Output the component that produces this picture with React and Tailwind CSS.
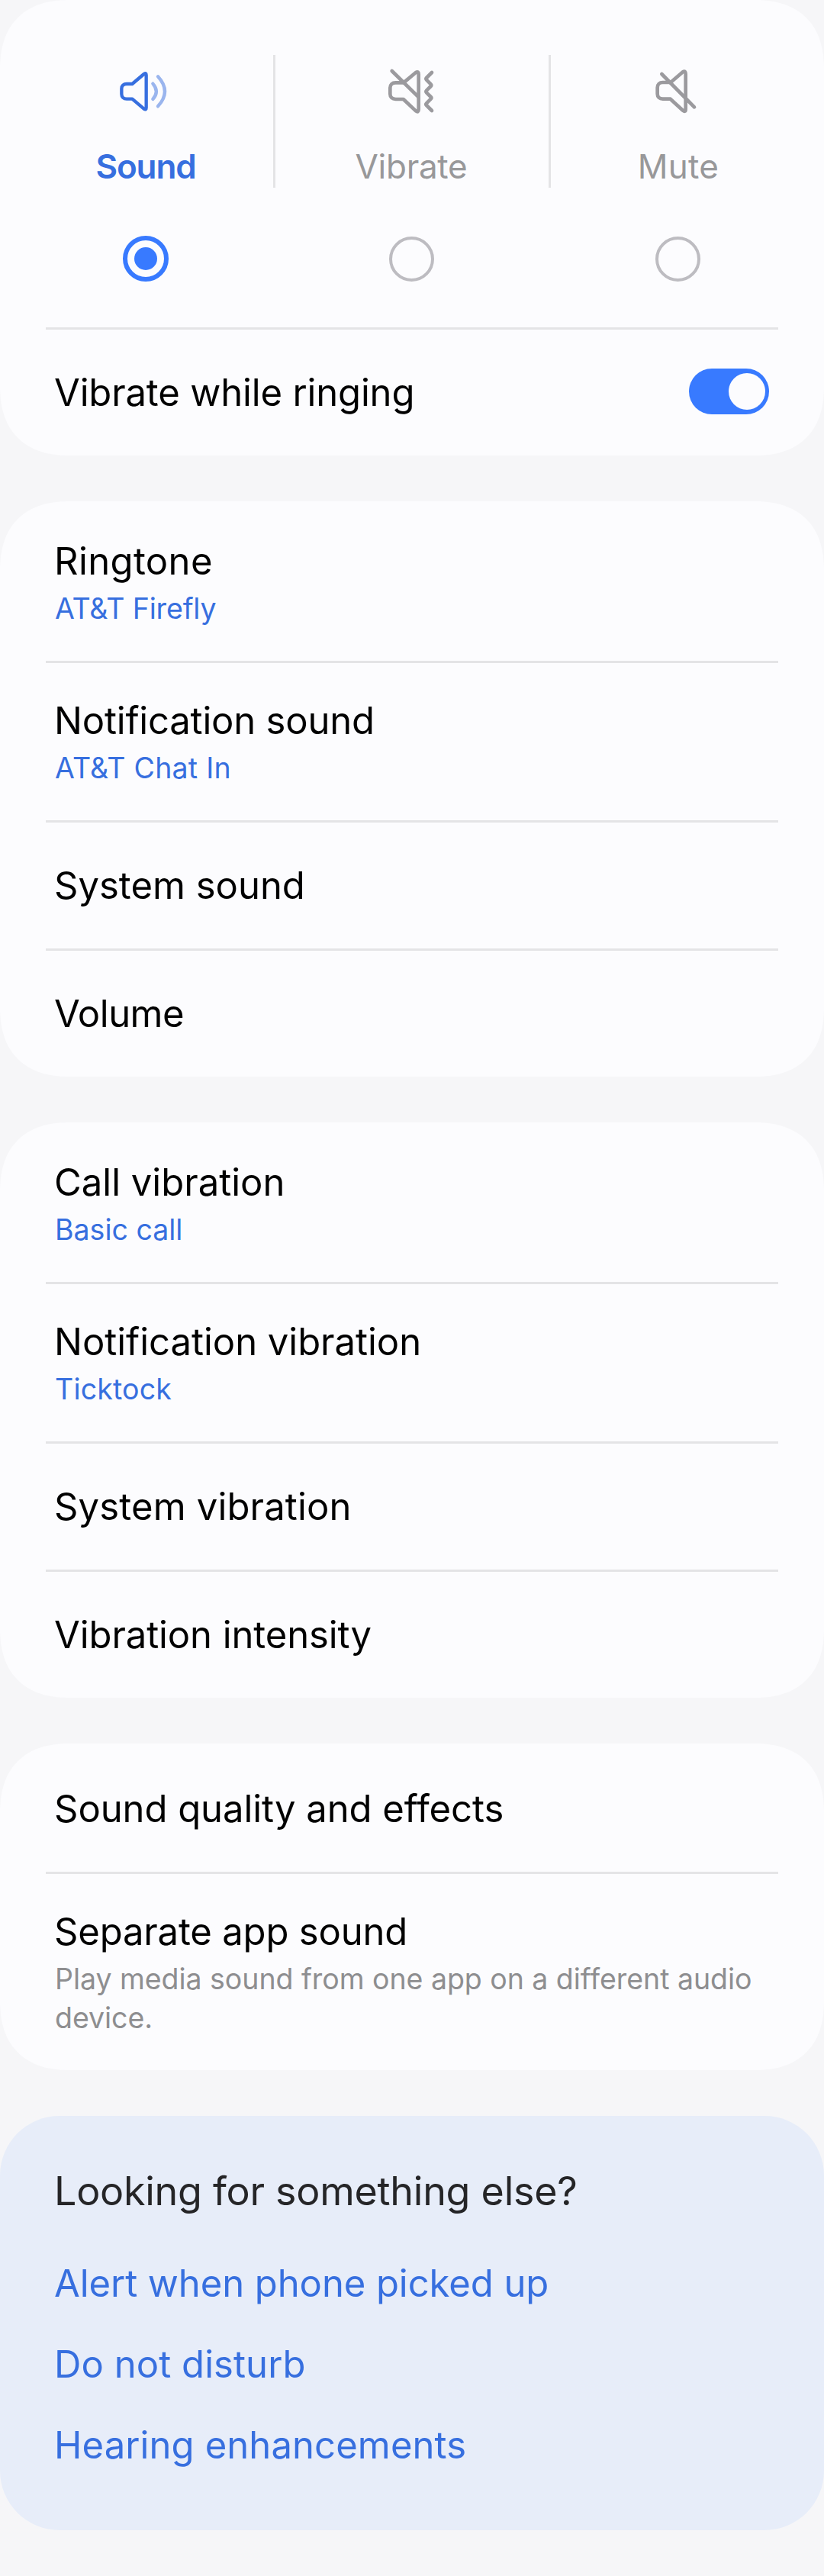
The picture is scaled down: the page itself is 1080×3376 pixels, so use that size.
function SoundIcon() {
  return (
    <svg width="102" height="80" viewBox="0 0 306 240" fill="none" strokeLinecap="round" strokeLinejoin="round">
      <path d="M100 90H78C66 90 58 97 58 109V130C58 142 66 149 78 149H100L146 188Q155 194 155 184V55Q155 45 146 51Z" stroke="#376fdf" strokeWidth="13" />
      <path d="M181 89Q208 120 181 150M201 61Q255 120 201 178" stroke="#9ab5ee" strokeWidth="13" />
    </svg>
  );
}

function VibrateIcon() {
  return (
    <svg width="100" height="80" viewBox="0 0 300 240" fill="none" stroke="#9b9a9e" strokeWidth="14" strokeLinecap="round" strokeLinejoin="round">
      <path d="M117 85H86C72 85 64 93 64 105V130C64 142 72 150 86 150H116L165 196Q176 204 176 190V52Q176 38 165 45Z" />
      <path d="M71 39L176 142" />
      <path d="M228 45L207 66Q203 70 207 74L224 91Q228 95 224 99L207 116Q203 120 207 124L224 141Q228 145 224 149L207 166Q203 170 207 174L228 195" />
    </svg>
  );
}

function MuteIcon() {
  return (
    <svg width="98" height="80" viewBox="0 0 294 240" fill="none" stroke="#9b9a9e" strokeWidth="14" strokeLinecap="round" strokeLinejoin="round">
      <path d="M117 84H86C73 84 65 92 65 104V129C65 141 73 149 86 149H116L165 194Q176 203 176 189V51Q176 36 165 43Z" />
      <path d="M82 51L210 181" />
    </svg>
  );
}

function Mode({ icon, label, selected, className }) {
  return (
    <div className={"flex w-[358px] flex-col items-center pt-20 pb-[60px] " + className}>
      {icon}
      <div className={"mt-[31px] text-[44px] leading-[54px] " + (selected ? "font-semibold tracking-[-1.1px] text-[#376fdf]" : "text-[#98989a]")}>
        {label}
      </div>
      {selected ? (
        <div className="mt-16 flex size-[60px] items-center justify-center rounded-full border-[6px] border-[#387aff]">
          <div className="size-[30px] rounded-full bg-[#387aff]" />
        </div>
      ) : (
        <div className="mt-16 flex size-[60px] items-center">
          <div className="size-[59px] rounded-full border-[4.5px] border-[#bdbcc1]" />
        </div>
      )}
    </div>
  );
}

function Card({ children }) {
  return (
    <section className="w-full rounded-[92px] bg-[#fcfcfe] [corner-shape:superellipse(1.25)]">{children}</section>
  );
}

function Divider({ hidden }) {
  return <div className={"mx-[60px] h-[3px] " + (hidden ? "" : "bg-[#e4e4e6]")} />;
}

function Item({ title, tracking = "", sub, subTracking = "", subColor = "text-[#376fdf]", first, end }) {
  return (
    <div>
      <Divider hidden={first} />
      <div className={sub ? "px-[72px] pt-11 pb-[43px]" : "flex items-center justify-between px-[72px] pt-[51px] pb-[52px]"}>
        <div className={"-ml-px pt-0.5 text-[49px] leading-[60px] whitespace-nowrap text-black " + tracking}>{title}</div>
        {sub && <div className={"mt-1.5 text-[37.5px] leading-[51px] " + subColor + " " + subTracking}>{sub}</div>}
        {end}
      </div>
    </div>
  );
}

function Toggle() {
  return (
    <div className="-mt-2.5 -mb-2 flex h-[60px] w-[105px] items-center justify-end rounded-full bg-[#387aff] pr-[5px]">
      <div className="size-12 rounded-full bg-[#fcfcfe]" />
    </div>
  );
}

export default function App() {
  return (
    <main className="flex h-[3376px] w-[1080px] flex-col gap-[60px] bg-[#f6f6f8] font-['Inter',sans-serif]">
      <Card>
        <div className="flex h-[429px]">
          <Mode icon={<SoundIcon />} label="Sound" selected className="pl-6" />
          <div className="mt-[72px] h-[174px] w-[3px] bg-[#e4e4e6]" />
          <Mode icon={<VibrateIcon />} label={<span className="-ml-0.5 tracking-[-0.28px]">Vibrate</span>} className="" />
          <div className="mt-[72px] h-[174px] w-[3px] bg-[#e4e4e6]" />
          <Mode icon={<MuteIcon />} label={<span className="tracking-[0.3px]">Mute</span>} className="pr-6" />
        </div>
        <Item title="Vibrate while ringing" tracking="tracking-[-0.16px]" end={<Toggle />} />
      </Card>

      <Card>
        <Item first title="Ringtone" tracking="tracking-[0.38px]" sub="AT&T Firefly" subTracking="tracking-[-0.15px]" />
        <Item title="Notification sound" tracking="tracking-[-0.2px]" sub="AT&T Chat In" subTracking="tracking-[0.23px]" />
        <Item title="System sound" />
        <Item title="Volume" tracking="tracking-[-0.48px]" />
      </Card>

      <Card>
        <Item first title="Call vibration" sub="Basic call" />
        <Item title="Notification vibration" tracking="tracking-[-0.03px]" sub="Ticktock" subTracking="tracking-[0.17px]" />
        <Item title="System vibration" tracking="tracking-[0.15px]" />
        <Item title="Vibration intensity" tracking="tracking-[-0.1px]" />
      </Card>

      <Card>
        <Item first title="Sound quality and effects" tracking="tracking-[-0.06px]" />
        <Item
          title="Separate app sound"
          tracking="tracking-[-0.18px]"
          sub="Play media sound from one app on a different audio device."
          subTracking="tracking-[-0.04px]"
          subColor="text-[#8e8e90]"
        />
      </Card>

      <section className="flex flex-col rounded-[78px] bg-[#e7edf9] px-[72px] pt-[68px] pb-[81px]">
        <h2 className="-ml-px text-[52px] leading-[62px] tracking-[-0.26px] text-[#252527]">Looking for something else?</h2>
        <div className="mt-[60px] -ml-px flex flex-col gap-[46px] text-[49px] leading-[60px] text-[#376fdf]">
          <a className="tracking-[-0.08px]">Alert when phone picked up</a>
          <a className="tracking-[0.06px]">Do not disturb</a>
          <a className="tracking-[0.1px]">Hearing enhancements</a>
        </div>
      </section>
    </main>
  );
}
